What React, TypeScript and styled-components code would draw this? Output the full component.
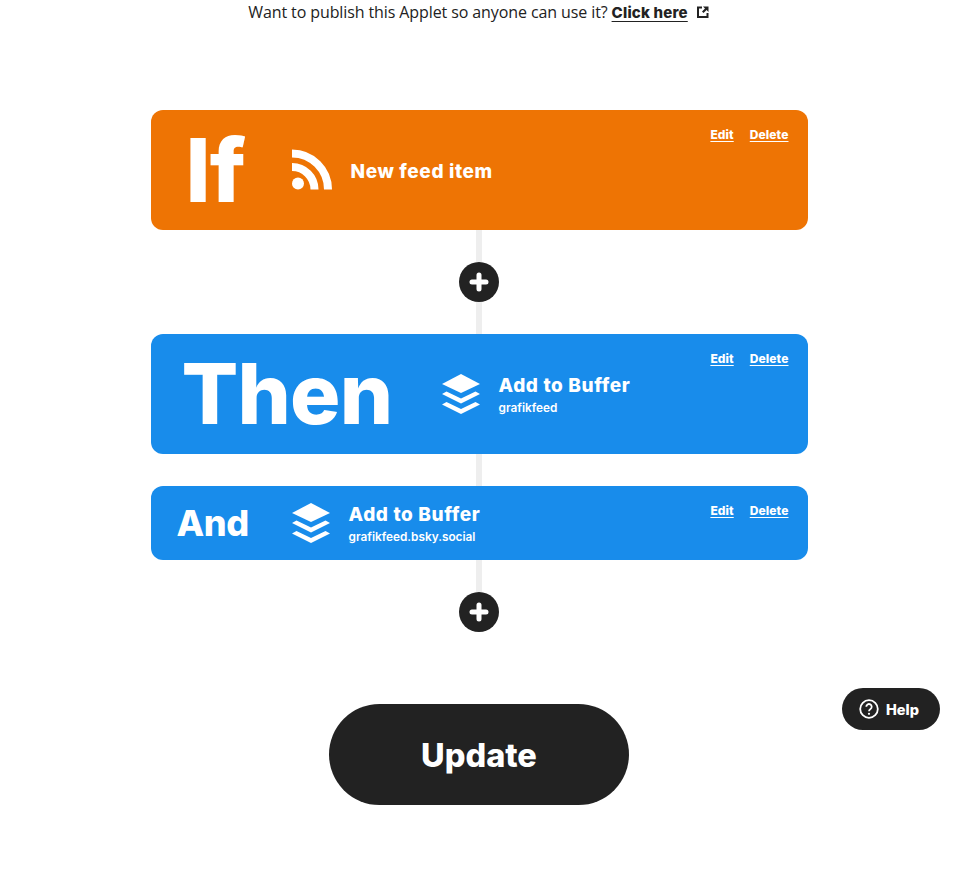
import styled, { createGlobalStyle } from "styled-components";

const GlobalStyle = createGlobalStyle`
  html, body {
    margin: 0;
    padding: 0;
    background: #fff;
  }
  body {
    font-family: "Inter", "Liberation Sans", sans-serif;
    font-variant-ligatures: none;
    color: #222;
  }
`;

const Page = styled.div`
  display: flex;
  flex-direction: column;
  align-items: center;
  width: 958px;
  height: 877px;
  overflow: hidden;
`;

const Notice = styled.div`
  display: flex;
  align-items: center;
  height: 24px;
  margin-bottom: 86px;
  font-family: "Open Sans", sans-serif;
  font-size: 16px;
  letter-spacing: -0.1px;
  color: #222;
`;

const NoticeLink = styled.a`
  margin-left: 4px;
  font-family: "Inter", sans-serif;
  font-size: 15px;
  font-weight: 800;
  letter-spacing: 0.2px;
  color: #222;
  text-decoration: underline;
  text-underline-offset: 3px;
`;

const LinkIcon = styled.svg`
  width: 14px;
  height: 14px;
  margin-left: 8px;
`;

const Card = styled.div<{ $tone: "orange" | "blue"; $short?: boolean }>`
  position: relative;
  display: flex;
  align-items: center;
  box-sizing: border-box;
  width: 657px;
  height: ${(p) => (p.$short ? "74px" : "120px")};
  border-radius: 12px;
  background: ${(p) => (p.$tone === "orange" ? "#ee7404" : "#188ceb")};
  color: #fff;
`;

const Keyword = styled.div<{ $size: number; $width: number; $left: number }>`
  flex: none;
  box-sizing: border-box;
  width: ${(p) => p.$width}px;
  padding-left: ${(p) => p.$left}px;
  font-size: ${(p) => p.$size}px;
  font-weight: 800;
  line-height: 1;
  letter-spacing: -0.01em;
`;

const IconSlot = styled.svg`
  flex: none;
  width: 40px;
  height: 42px;
`;

const Details = styled.div<{ $gap: number; $single?: boolean }>`
  display: flex;
  flex-direction: column;
  margin-left: ${(p) => p.$gap}px;
  margin-top: ${(p) => (p.$single ? "3px" : "2px")};
`;

const ActionName = styled.div`
  font-size: 19px;
  font-weight: 800;
  line-height: 24px;
  letter-spacing: 0.62px;
`;

const Account = styled.div`
  margin-top: 2px;
  font-size: 11.8px;
  font-weight: 600;
  line-height: 16px;
`;

const CardLinks = styled.div`
  position: absolute;
  top: 17px;
  right: 19px;
  display: flex;
  gap: 16px;
`;

const CardLink = styled.a`
  font-size: 12px;
  font-weight: 800;
  line-height: 16px;
  letter-spacing: 0.1px;
  color: #fff;
  text-decoration: underline;
  text-underline-offset: 2px;
`;

const Line = styled.div`
  width: 6px;
  height: 32px;
  background: #eee;
`;

const AddButton = styled.button`
  display: flex;
  align-items: center;
  justify-content: center;
  width: 40px;
  height: 40px;
  padding: 0;
  border: 0;
  border-radius: 50%;
  background: #222;
`;

const UpdateButton = styled.button`
  width: 300px;
  height: 101px;
  margin-top: 72px;
  padding: 2px 0 0;
  border: 0;
  border-radius: 51px;
  background: #222;
  color: #fff;
  font-family: "Inter", sans-serif;
  font-size: 32.5px;
  font-weight: 800;
`;

const HelpButton = styled.button`
  position: fixed;
  top: 688px;
  left: 842px;
  display: flex;
  align-items: center;
  gap: 7px;
  box-sizing: border-box;
  width: 98px;
  height: 42px;
  padding: 0 0 0 17px;
  border: 0;
  border-radius: 21px;
  background: #222;
  color: #fff;
  font-family: "Inter", sans-serif;
  font-size: 14.5px;
  font-weight: 800;
`;

function RssIcon() {
  return (
    <IconSlot viewBox="0 0 40 42">
      <circle cx="6" cy="34.5" r="6" fill="#fff" />
      <path
        d="M0 4.5a36 36 0 0 1 36 36M0 18a22.5 22.5 0 0 1 22.5 22.5"
        fill="none"
        stroke="#fff"
        strokeWidth="8"
      />
    </IconSlot>
  );
}

function BufferIcon() {
  return (
    <IconSlot viewBox="0 0 40 42">
      <path d="M20 1 39 11 20 20 1 11Z" fill="#fff" />
      <path d="M1 21 5.5 18.5 20 25.5 34.5 18.5 39 21 20 30.5Z" fill="#fff" />
      <path d="M1 31.5 5.5 29 20 36 34.5 29 39 31.5 20 41Z" fill="#fff" />
    </IconSlot>
  );
}

function PlusIcon() {
  return (
    <svg width="20" height="20" viewBox="0 0 20 20">
      <path d="M10 3v14M3 10h14" stroke="#fff" strokeWidth="5" strokeLinecap="round" />
    </svg>
  );
}

function Links() {
  return (
    <CardLinks>
      <CardLink>Edit</CardLink>
      <CardLink>Delete</CardLink>
    </CardLinks>
  );
}

export default function App() {
  return (
    <Page>
      <GlobalStyle />
      <Notice>
        Want to publish this Applet so anyone can use it?
        <NoticeLink>Click here</NoticeLink>
        <LinkIcon viewBox="0 0 14 14">
          <path d="M6 2.5H2v9.5h9.5V8" fill="none" stroke="#222" strokeWidth="2" />
          <path d="M7 1.5h5.5V7L10.6 5 7.5 8 6 6.5 9 3.4Z" fill="#222" />
        </LinkIcon>
      </Notice>

      <Card $tone="orange">
        <Keyword $size={88} $width={141} $left={35}>If</Keyword>
        <RssIcon />
        <Details $gap={19} $single>
          <ActionName>New feed item</ActionName>
        </Details>
        <Links />
      </Card>

      <Line />
      <AddButton><PlusIcon /></AddButton>
      <Line />

      <Card $tone="blue">
        <Keyword $size={84} $width={290} $left={31}>Then</Keyword>
        <BufferIcon />
        <Details $gap={18}>
          <ActionName>Add to Buffer</ActionName>
          <Account>grafikfeed</Account>
        </Details>
        <Links />
      </Card>

      <Line />

      <Card $tone="blue" $short>
        <Keyword $size={36} $width={140} $left={26}>And</Keyword>
        <BufferIcon />
        <Details $gap={18}>
          <ActionName>Add to Buffer</ActionName>
          <Account>grafikfeed.bsky.social</Account>
        </Details>
        <Links />
      </Card>

      <Line />
      <AddButton><PlusIcon /></AddButton>

      <UpdateButton>Update</UpdateButton>

      <HelpButton>
        <svg width="20" height="20" viewBox="0 0 20 20">
          <circle cx="10" cy="10" r="8.8" fill="none" stroke="#fff" strokeWidth="1.8" />
          <path d="M7.3 7.8a2.7 2.7 0 1 1 4.2 2.2c-1 .7-1.5 1.1-1.5 2.2" fill="none" stroke="#fff" strokeWidth="1.8" />
          <circle cx="10" cy="14.8" r="1.1" fill="#fff" />
        </svg>
        Help
      </HelpButton>
    </Page>
  );
}
